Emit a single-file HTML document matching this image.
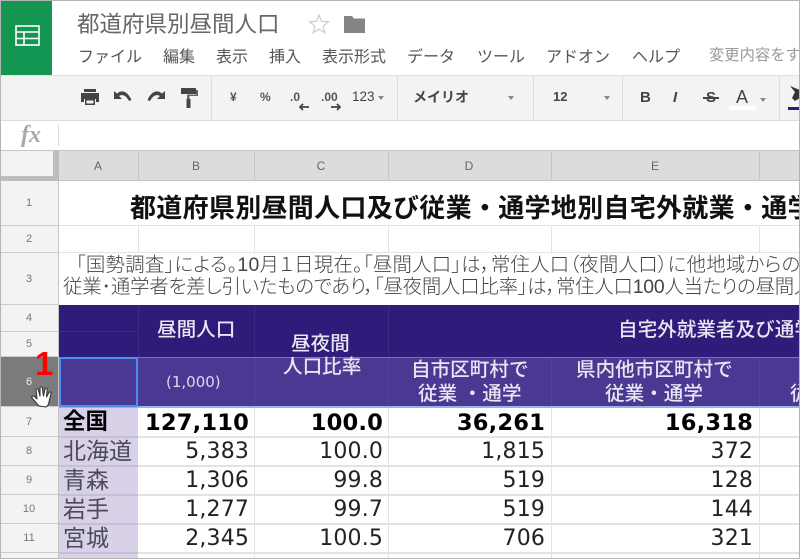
<!DOCTYPE html>
<html lang="ja"><head><meta charset="utf-8">
<style>
html,body{margin:0;padding:0;background:#fff}
#p{position:relative;width:800px;height:559px;overflow:hidden;background:#fff;font-family:"Liberation Sans","Noto Sans CJK JP",sans-serif;filter:blur(.3px)}
#p div,#p svg{position:absolute}
.t{white-space:nowrap;line-height:1}
.m{top:50px;font-size:16px;color:#555}
.tb{font-size:12px;font-weight:bold;color:#555;top:91px}
.ch{top:160px;font-size:12px;color:#666;width:20px;text-align:center}
.rh{left:0;width:58px;text-align:center;font-size:11px;color:#777;background:#f3f3f3;box-sizing:border-box;border-bottom:1px solid #ccc}
.car{width:0;height:0;border-left:3.5px solid transparent;border-right:3.5px solid transparent;border-top:4px solid #888}
.n{font-family:"DejaVu Sans",sans-serif;font-size:22px;color:#222;text-align:right;white-space:nowrap;line-height:1;letter-spacing:.15px}
.b{font-weight:bold;color:#000;font-size:22.6px;letter-spacing:.15px}
.k{left:63px;font-size:23px;color:#4a4a58;line-height:1;white-space:nowrap}
.h{color:#e8e6f2;font-size:19.6px;line-height:1;white-space:nowrap;font-weight:500}
.hl{background:#e3e3e3}
.dl{background:#3d2a85;width:1px}
.r3{font-size:19.4px;color:#444;font-weight:300;font-feature-settings:"palt"}
</style></head><body>
<div id="p">
<!-- App header -->
<div style="left:1px;top:1px;width:51px;height:74px;background:#149653"></div>
<svg style="left:15px;top:25px" width="25" height="21" viewBox="0 0 25 21" fill="none" stroke="#fff" stroke-width="1.6"><rect x="1" y="1" width="23" height="19"/><path d="M1 7h23M1 13.500h23M9 7v13"/></svg>
<div class="t" style="left:77px;top:14px;font-size:22.5px;color:#666">都道府県別昼間人口</div>
<svg style="left:308px;top:13px" width="22" height="22" viewBox="0 0 22 22" fill="none" stroke="#ccc" stroke-width="1.2"><path d="M11 2l2.600 6.300 6.700.5-5.100 4.400 1.600 6.500L11 16.200l-5.800 3.500 1.600-6.500L1.700 8.800l6.700-.5z"/></svg>
<svg style="left:344px;top:15px" width="21" height="18" viewBox="0 0 21 18"><path d="M0 1h8l2 2.500h11V18H0z" fill="#858585"/></svg>
<div class="t m" style="left:78px">ファイル</div>
<div class="t m" style="left:163px">編集</div>
<div class="t m" style="left:216px">表示</div>
<div class="t m" style="left:269px">挿入</div>
<div class="t m" style="left:322px">表示形式</div>
<div class="t m" style="left:407px">データ</div>
<div class="t m" style="left:477px">ツール</div>
<div class="t m" style="left:546px">アドオン</div>
<div class="t m" style="left:632px">ヘルプ</div>
<div class="t" style="left:709px;top:48px;font-size:15.300px;color:#999">変更内容をすべて</div>
<!-- Toolbar -->
<div style="left:0;top:75px;width:800px;height:46px;background:#f3f3f3;border-top:1px solid #e2e2e2;border-bottom:1px solid #ddd;box-sizing:border-box"></div>
<div style="left:211px;top:76px;width:1px;height:44px;background:#ddd"></div>
<div style="left:397px;top:76px;width:1px;height:44px;background:#ddd"></div>
<div style="left:533px;top:76px;width:1px;height:44px;background:#ddd"></div>
<div style="left:622px;top:76px;width:1px;height:44px;background:#ddd"></div>
<div style="left:779px;top:76px;width:1px;height:44px;background:#ddd"></div>
<svg style="left:80px;top:88px" width="20" height="18" viewBox="0 0 20 18" fill="#444"><path d="M4 1h12v3H4zM1 5h18v9h-3v-3H4v3H1z"/><path d="M5 11h10v6H5z" fill="#444"/><path d="M6.500 12.500h7v3h-7z" fill="#f3f3f3"/></svg>
<svg style="left:113px;top:90px" width="20" height="13" viewBox="0 0 20 13" fill="#444"><path d="M1 1v8h8L6 6c3-2 7-1 10 5l2.500-1C15 2 9-1 4 3.600z"/></svg>
<svg style="left:146px;top:90px" width="20" height="13" viewBox="0 0 20 13" fill="#444"><path d="M19 1v8h-8l3-3c-3-2-7-1-10 5l-2.500-1C5 2 11-1 16 3.600z"/></svg>
<svg style="left:180px;top:87px" width="19" height="21" viewBox="0 0 19 21" fill="#444"><path d="M1 1h15v6H1z"/><path d="M16 3h2v6H9.500v3H7V7.500h9z" fill="#666"/><path d="M6.500 12h4v9h-4z"/></svg>
<div class="t tb" style="left:230px;font-size:12px">¥</div>
<div class="t tb" style="left:260px">%</div>
<div class="t tb" style="left:290px">.0</div>
<svg style="left:298px;top:103px" width="12" height="8" viewBox="0 0 12 8"><path d="M11 4H2M5 1L2 4l3 3" fill="none" stroke="#444" stroke-width="1.800"/></svg>
<div class="t tb" style="left:321px">.00</div>
<svg style="left:330px;top:103px" width="12" height="8" viewBox="0 0 12 8"><path d="M1 4h9M7 1l3 3-3 3" fill="none" stroke="#444" stroke-width="1.800"/></svg>
<div class="t tb" style="left:352px;font-weight:normal;font-size:13.500px;top:90px;color:#444">123</div>
<div class="car" style="left:378px;top:96px"></div>
<div class="t" style="left:413px;top:90px;font-size:14px;font-weight:bold;color:#444">メイリオ</div>
<div class="car" style="left:508px;top:96px"></div>
<div class="t" style="left:553px;top:90px;font-size:13px;font-weight:bold;color:#444">12</div>
<div class="car" style="left:604px;top:96px"></div>
<div class="t" style="left:640px;top:90px;font-size:15px;font-weight:bold;color:#444">B</div>
<div class="t" style="left:673px;top:90px;font-size:15px;font-weight:bold;font-style:italic;color:#444">I</div>
<div class="t" style="left:706px;top:90px;font-size:15px;font-weight:bold;color:#444">S</div>
<div style="left:703px;top:97px;width:16px;height:1.500px;background:#444"></div>
<div class="t" style="left:736px;top:88px;font-size:18px;color:#444">A</div>
<div style="left:729px;top:106px;width:27px;height:4px;background:#fff"></div>
<div class="car" style="left:760px;top:98px"></div>
<svg style="left:789px;top:85px" width="11" height="18" viewBox="0 0 11 18" fill="#333"><path d="M1 1l5 6-3 6 3 3 5-3V5z"/></svg>
<div style="left:788px;top:107px;width:12px;height:3px;background:#2b1a85"></div>
<!-- Formula bar -->
<div class="t" style="left:21px;top:123px;font-size:24px;font-style:italic;font-weight:bold;color:#aaa;font-family:'Liberation Serif',serif">fx</div>
<div style="left:58px;top:125px;width:1px;height:21px;background:#ddd"></div>
<!-- Column header -->
<div style="left:0;top:150px;width:800px;height:31px;background:#dcdcdc;border-top:1px solid #c4c4c4;border-bottom:1px solid #c4c4c4;box-sizing:border-box"></div>
<div style="left:0;top:151px;width:53px;height:25px;background:#f3f3f3"></div>
<div style="left:53px;top:151px;width:6px;height:29px;background:#bdbdbd"></div>
<div style="left:0;top:176px;width:59px;height:5px;background:#bdbdbd"></div>
<div style="left:138px;top:151px;width:1px;height:29px;background:#c6c6c6"></div>
<div style="left:254px;top:151px;width:1px;height:29px;background:#c6c6c6"></div>
<div style="left:388px;top:151px;width:1px;height:29px;background:#c6c6c6"></div>
<div style="left:551px;top:151px;width:1px;height:29px;background:#c6c6c6"></div>
<div style="left:759px;top:151px;width:1px;height:29px;background:#c6c6c6"></div>
<div class="t ch" style="left:88px">A</div>
<div class="t ch" style="left:186px">B</div>
<div class="t ch" style="left:311px">C</div>
<div class="t ch" style="left:459px">D</div>
<div class="t ch" style="left:645px">E</div>
<!-- Row headers -->
<div class="rh" style="top:181px;height:45px;line-height:45px">1</div>
<div class="rh" style="top:226px;height:27px;line-height:27px">2</div>
<div class="rh" style="top:253px;height:52px;line-height:52px">3</div>
<div class="rh" style="top:305px;height:27px;line-height:27px">4</div>
<div class="rh" style="top:332px;height:25px;line-height:25px">5</div>
<div class="rh" style="top:357px;height:50px;line-height:50px;background:#7b7b7b;color:#eee">6</div>
<div class="rh" style="top:407px;height:30px;line-height:30px">7</div>
<div class="rh" style="top:437px;height:29px;line-height:29px">8</div>
<div class="rh" style="top:466px;height:29px;line-height:29px">9</div>
<div class="rh" style="top:495px;height:29px;line-height:29px">10</div>
<div class="rh" style="top:524px;height:29px;line-height:29px">11</div>
<div class="rh" style="top:553px;height:6px"></div>
<div style="left:58px;top:181px;width:1px;height:378px;background:#c4c4c4"></div>
<!-- Rows 1-3 -->
<div class="t" style="left:130px;top:195px;font-size:26px;font-weight:bold;color:#111;letter-spacing:.3px">都道府県別昼間人口及び従業・通学地別自宅外就業・通学</div>
<div class="hl" style="left:59px;top:225px;width:741px;height:1px"></div>
<div class="hl" style="left:59px;top:252px;width:741px;height:1px"></div>
<div class="hl" style="left:138px;top:226px;width:1px;height:26px"></div>
<div class="hl" style="left:254px;top:226px;width:1px;height:26px"></div>
<div class="hl" style="left:388px;top:226px;width:1px;height:26px"></div>
<div class="hl" style="left:551px;top:226px;width:1px;height:26px"></div>
<div class="hl" style="left:759px;top:226px;width:1px;height:26px"></div>
<div class="t r3" style="left:76px;top:256px;letter-spacing:.24px">「国勢調査」による。10月１日現在。「昼間人口」は，常住人口（夜間人口）に他地域からの</div>
<div class="t r3" style="left:63px;top:278px;letter-spacing:-.2px">従業･通学者を差し引いたものであり，「昼夜間人口比率」は，常住人口100人当たりの昼間人口</div>
<!-- Dark table header -->
<div style="left:59px;top:305px;width:741px;height:53px;background:#2f1b79"></div>
<div style="left:59px;top:358px;width:741px;height:49px;background:#4a3892"></div>
<div class="dl" style="left:138px;top:305px;height:53px"></div>
<div class="dl" style="left:254px;top:305px;height:53px"></div>
<div class="dl" style="left:388px;top:305px;height:53px"></div>
<div class="dl" style="left:254px;top:358px;height:49px;background:#54439a"></div>
<div class="dl" style="left:388px;top:358px;height:49px;background:#54439a"></div>
<div class="dl" style="left:551px;top:358px;height:49px;background:#54439a"></div>
<div class="dl" style="left:759px;top:358px;height:49px;background:#54439a"></div>
<div style="left:59px;top:331px;width:79px;height:1px;background:#3d2a85"></div>
<div style="left:59px;top:357px;width:741px;height:1px;background:#5a7ed8"></div>
<div style="left:59px;top:406px;width:741px;height:2px;background:#8fb4ee"></div>
<div style="left:59px;top:357px;width:79px;height:50px;box-sizing:border-box;border:2px solid #4d8ff0"></div>
<div class="t h" style="left:157px;top:321px">昼間人口</div>
<div class="t h" style="left:291px;top:335px">昼夜間</div>
<div class="t h" style="left:283px;top:358px">人口比率</div>
<div class="t h" style="left:618px;top:321px">自宅外就業者及び通学</div>
<div class="t" style="left:166px;top:375px;font-family:'DejaVu Sans',sans-serif;font-size:15px;color:#dcdaea">(1,000)</div>
<div class="t h" style="left:411px;top:361px">自市区町村で</div>
<div class="t h" style="left:418px;top:385px">従業 ・通学</div>
<div class="t h" style="left:576px;top:361px">県内他市区町村で</div>
<div class="t h" style="left:605px;top:385px">従業・通学</div>
<div class="t h" style="left:790px;top:385px">従</div>
<!-- Red 1 and hand -->
<div class="t" style="left:35px;top:347px;font-size:33px;font-weight:bold;color:#f00">1</div>
<svg style="left:30px;top:384px" width="25" height="25" viewBox="0 0 25 25"><path d="M9 22L2 14c-.8-1.500 1-2.500 2.500-1.500L7 15 6 6c0-1.500 2-1.500 2.400 0L10 12 10 4c0-1.500 2.300-1.500 2.400 0L13.500 12 15 5c.4-1.500 2.400-1 2.200.5L16.500 13 19 8.500c.8-1.200 2.500-.5 2 1L19 18c-.5 3-2 4.500-3 5z" fill="#fff" stroke="#333" stroke-width="1.100" stroke-linejoin="round"/></svg>
<!-- Data -->
<div style="left:59px;top:408px;width:79px;height:151px;background:#d8d1e8"></div>
<div class="hl" style="left:59px;top:436px;width:741px;height:2px"></div>
<div class="hl" style="left:59px;top:465px;width:741px;height:2px"></div>
<div class="hl" style="left:59px;top:494px;width:741px;height:2px"></div>
<div class="hl" style="left:59px;top:523px;width:741px;height:2px"></div>
<div class="hl" style="left:59px;top:552px;width:741px;height:2px"></div>
<div style="left:59px;top:436px;width:79px;height:2px;background:#c6bfd8"></div>
<div style="left:59px;top:465px;width:79px;height:2px;background:#c6bfd8"></div>
<div style="left:59px;top:494px;width:79px;height:2px;background:#c6bfd8"></div>
<div style="left:59px;top:523px;width:79px;height:2px;background:#c6bfd8"></div>
<div style="left:59px;top:552px;width:79px;height:2px;background:#c6bfd8"></div>
<div class="hl" style="left:254px;top:408px;width:1px;height:151px"></div>
<div class="hl" style="left:388px;top:408px;width:1px;height:151px"></div>
<div class="hl" style="left:551px;top:408px;width:1px;height:151px"></div>
<div class="hl" style="left:759px;top:408px;width:1px;height:151px"></div>
<div class="t k" style="top:411px;font-size:22.5px;font-weight:bold;color:#000">全国</div>
<div class="t k" style="top:440px">北海道</div>
<div class="t k" style="top:469px">青森</div>
<div class="t k" style="top:498px">岩手</div>
<div class="t k" style="top:527px">宮城</div>

<div class="n b" style="right:551px;top:412px">127,110</div>
<div class="n b" style="right:417px;top:412px">100.0</div>
<div class="n b" style="right:255px;top:412px">36,261</div>
<div class="n b" style="right:47px;top:412px">16,318</div>

<div class="n" style="right:551px;top:441px">5,383</div>
<div class="n" style="right:417px;top:441px">100.0</div>
<div class="n" style="right:255px;top:441px">1,815</div>
<div class="n" style="right:47px;top:441px">372</div>

<div class="n" style="right:551px;top:470px">1,306</div>
<div class="n" style="right:417px;top:470px">99.8</div>
<div class="n" style="right:255px;top:470px">519</div>
<div class="n" style="right:47px;top:470px">128</div>

<div class="n" style="right:551px;top:499px">1,277</div>
<div class="n" style="right:417px;top:499px">99.7</div>
<div class="n" style="right:255px;top:499px">519</div>
<div class="n" style="right:47px;top:499px">144</div>

<div class="n" style="right:551px;top:528px">2,345</div>
<div class="n" style="right:417px;top:528px">100.5</div>
<div class="n" style="right:255px;top:528px">706</div>
<div class="n" style="right:47px;top:528px">321</div>
<!-- Outer frame -->
<div style="left:0;top:0;width:800px;height:559px;box-sizing:border-box;border:1px solid #b5b5b5"></div>
</div>
</body></html>
